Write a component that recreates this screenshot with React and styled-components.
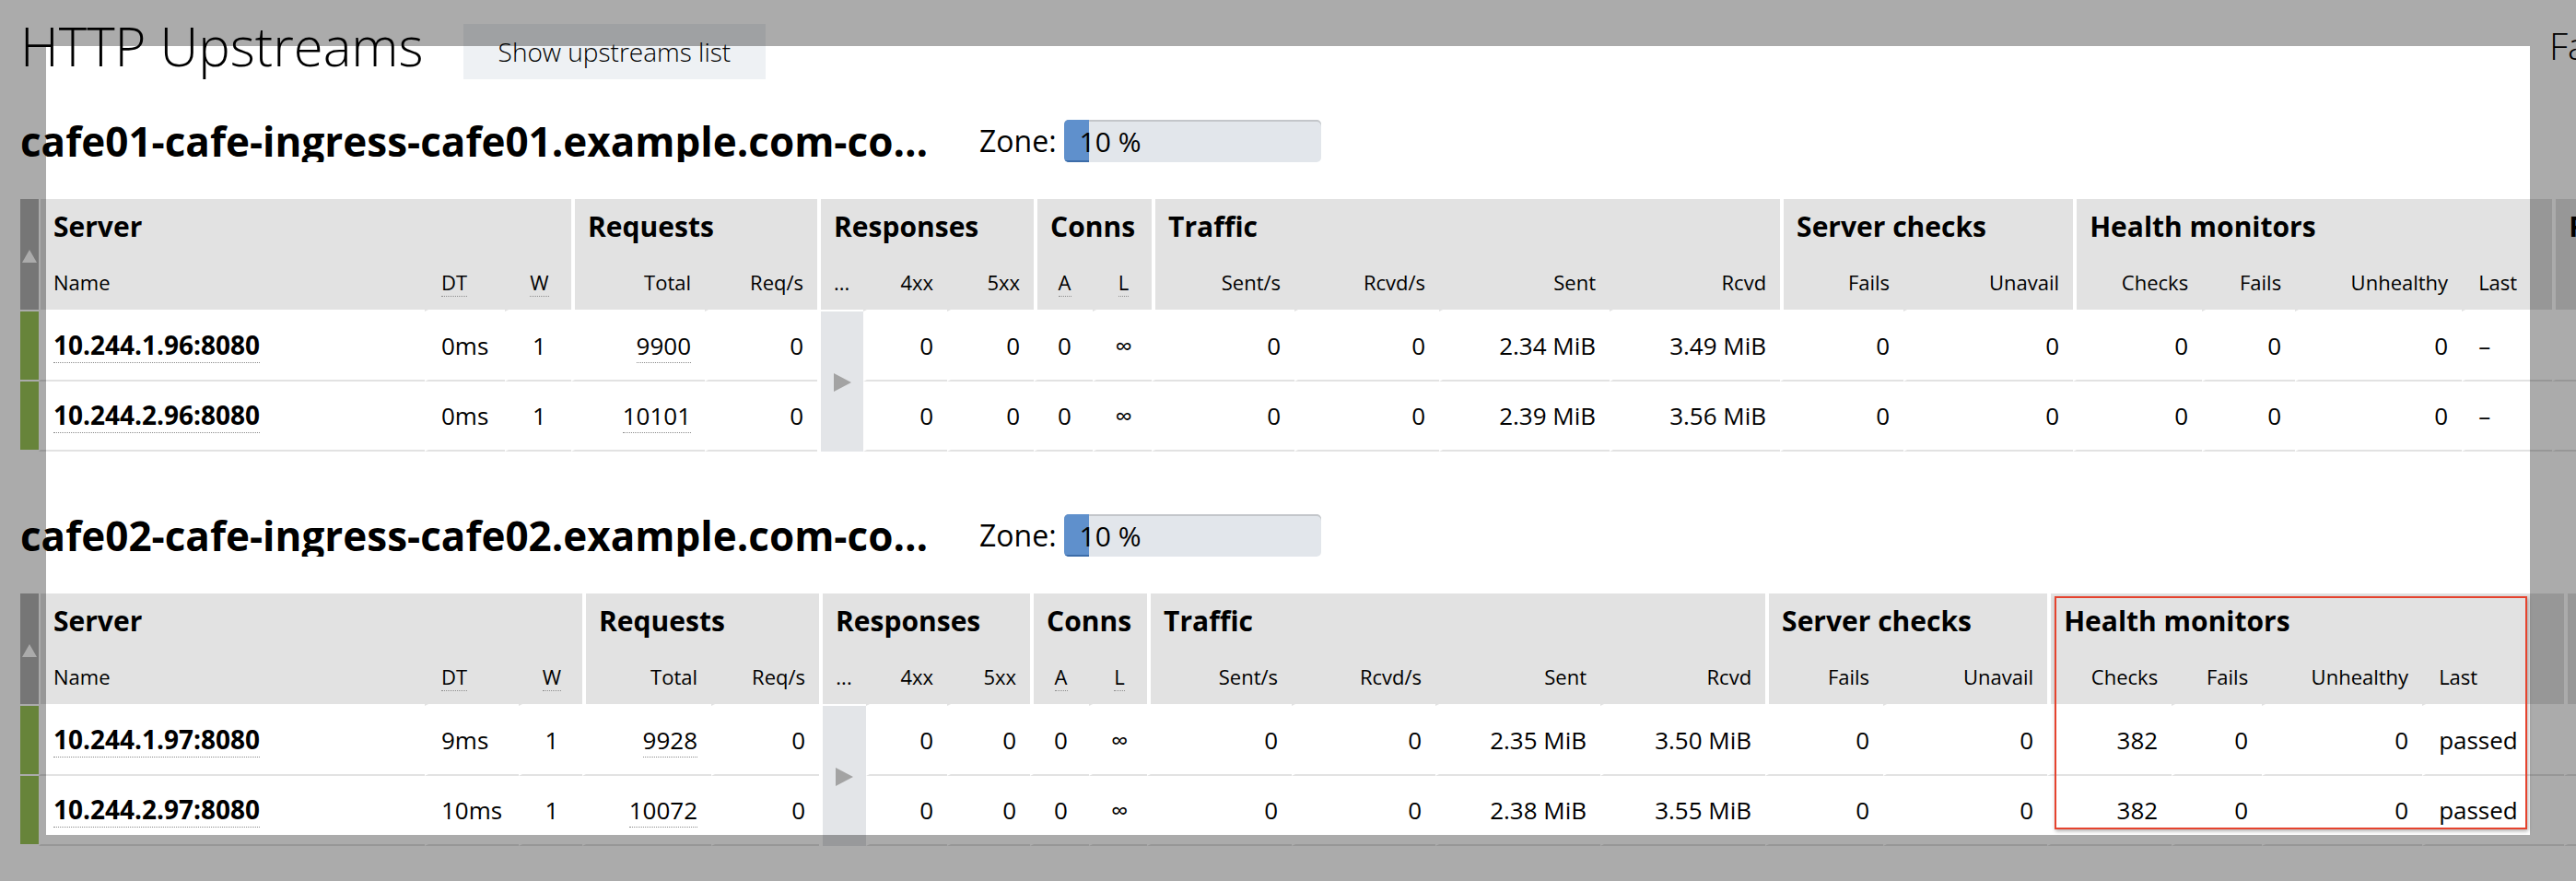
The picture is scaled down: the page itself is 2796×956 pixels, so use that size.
import React from 'react';
import styled, { createGlobalStyle } from 'styled-components';

const GlobalStyle = createGlobalStyle`
  html, body { margin: 0; padding: 0; background: #fff; overflow: hidden; }
  body { font-family: "Open Sans", "DejaVu Sans", sans-serif; color: #000; }
  * { box-sizing: border-box; }
`;

const Page = styled.div`
  padding: 16px 0 0 22px;
  width: max-content;
`;

const Toolbar = styled.header`
  display: flex;
  align-items: flex-start;
  width: 2935px;
`;

const Title = styled.h1`
  margin: 0;
  font-size: 58px;
  font-weight: 300;
  line-height: 68px;
  white-space: nowrap;
`;

const ListButton = styled.button`
  margin: 10px 0 0 43px;
  height: 60px;
  padding: 0 38px;
  border: 0;
  background: #eef1f4;
  font-family: inherit;
  font-size: 28px;
  font-weight: 300;
  color: #000;
  white-space: nowrap;
`;

const FilterLabel = styled.span`
  margin-left: auto;
  font-size: 40px;
  font-weight: 300;
  line-height: 68px;
  white-space: nowrap;
`;

const Section = styled.section`
  margin-top: 44px;
  & + & { margin-top: 68px; }
`;

const SectionHead = styled.div`
  display: flex;
  align-items: center;
  height: 46px;
`;

const UpstreamName = styled.h2`
  flex: none;
  width: 1000px;
  margin: 0;
  font-size: 44px;
  font-weight: 700;
  line-height: 46px;
  white-space: nowrap;
  overflow: hidden;
  text-overflow: ellipsis;
`;

const ZoneLabel = styled.span`
  margin-left: 41px;
  font-size: 32px;
  line-height: 46px;
`;

const ZoneBar = styled.div`
  position: relative;
  display: flex;
  align-items: center;
  margin-left: 8px;
  width: 279px;
  height: 46px;
  padding-left: 17px;
  border-radius: 5px;
  overflow: hidden;
  background: #e2e6eb;
  box-shadow: inset 0 2px 0 #c3c6ca;
  font-size: 30px;
`;

const ZoneFill = styled.div`
  position: absolute;
  left: 0;
  top: 0;
  bottom: 0;
  background: #5f90cc;
  border-bottom: 2px solid #3c6ca8;
`;

const ZoneValue = styled.span`
  position: relative;
  white-space: nowrap;
`;

const Table = styled.table`
  margin-top: 40px;
  border-collapse: separate;
  border-spacing: 0;
  table-layout: fixed;
  width: ${p => p.$w}px;
`;

const Col = styled.col`
  width: ${p => p.$w}px;
`;

const SortTh = styled.th`
  padding: 0;
  background: #b0b0b0;
  border-bottom: 2px solid #fff;
  vertical-align: middle;
  text-align: center;
`;

const UpArrow = styled.span`
  display: inline-block;
  width: 0;
  height: 0;
  border-left: 8px solid transparent;
  border-right: 8px solid transparent;
  border-bottom: 14px solid #fff;
  vertical-align: middle;
`;

const GroupTh = styled.th`
  padding: 0 14px;
  background: #e2e2e2;
  border-left: ${p => (p.$first ? 2 : 4)}px solid #fff;
  font-size: 30px;
  font-weight: 700;
  line-height: 60px;
  text-align: left;
  white-space: nowrap;
  overflow: hidden;
`;

const SubTh = styled.th`
  padding: 0 15px 0 14px;
  background: #e2e2e2;
  border-left: ${p => (p.$first ? 2 : 4)}px solid ${p => (p.$groupStart ? '#fff' : 'transparent')};
  border-bottom: 2px solid #fff;
  font-size: 22px;
  font-weight: 400;
  line-height: 60px;
  text-align: ${p => p.$align};
  white-space: nowrap;
  overflow: hidden;
`;

const StatusTd = styled.td`
  padding: 0;
  background: ${p => (p.$up ? '#9ac557' : '#d9534f')};
  border-bottom: 2px solid #fff;
`;

const Td = styled.td`
  padding: 0 15px 0 14px;
  border-left: ${p => (p.$first ? 2 : 4)}px solid #fff;
  border-bottom: 2px solid #e2e2e2;
  font-size: 26px;
  line-height: 74px;
  height: 76px;
  text-align: ${p => p.$align};
  white-space: nowrap;
  overflow: hidden;
`;

const ExpanderTd = styled.td`
  padding: 0;
  background: #e3e5e8;
  border-left: 4px solid #fff;
  vertical-align: middle;
  text-align: center;
`;

const RightArrow = styled.span`
  display: inline-block;
  width: 0;
  height: 0;
  border-top: 10.5px solid transparent;
  border-bottom: 10.5px solid transparent;
  border-left: 19px solid #a3a3a3;
  vertical-align: middle;
`;

const Abbr = styled.span`
  border-bottom: 1px dotted #8c8c8c;
`;

const NameLink = styled.span`
  font-weight: 700;
  font-size: 28px;
  line-height: 1;
  border-bottom: 1px dotted #8c8c8c;
`;

const Dotted = styled.span`
  border-bottom: 1px dotted #8c8c8c;
`;

const Dim = styled.div`
  position: absolute;
  left: 50px;
  top: 50px;
  width: 2696px;
  height: 856px;
  box-shadow: 0 0 0 4000px rgba(0, 0, 0, 0.33);
  pointer-events: none;
  z-index: 5;
`;

const Highlight = styled.div`
  position: absolute;
  left: 2230px;
  top: 647px;
  width: 513px;
  height: 253px;
  border: 2px solid #e5432e;
  box-shadow: 1px 2px 4px rgba(0, 0, 0, 0.3);
  pointer-events: none;
  z-index: 6;
`;

const GROUPS = [
  { title: 'Server', span: 3 },
  { title: 'Requests', span: 2 },
  { title: 'Responses', span: 3 },
  { title: 'Conns', span: 2 },
  { title: 'Traffic', span: 4 },
  { title: 'Server checks', span: 2 },
  { title: 'Health monitors', span: 4 },
  { title: 'Response time', span: 2 },
];

const COLUMNS = [
  { key: 'name', label: 'Name', align: 'left', groupStart: true },
  { key: 'dt', label: 'DT', align: 'left', abbr: true },
  { key: 'w', label: 'W', align: 'center', abbr: true },
  { key: 'total', label: 'Total', align: 'right', groupStart: true },
  { key: 'rps', label: 'Req/s', align: 'right' },
  { key: 'more', label: '...', align: 'center', groupStart: true },
  { key: 'r4', label: '4xx', align: 'right' },
  { key: 'r5', label: '5xx', align: 'right' },
  { key: 'active', label: 'A', align: 'center', abbr: true, groupStart: true },
  { key: 'limit', label: 'L', align: 'center', abbr: true },
  { key: 'sentRate', label: 'Sent/s', align: 'right', groupStart: true },
  { key: 'rcvdRate', label: 'Rcvd/s', align: 'right' },
  { key: 'sent', label: 'Sent', align: 'right' },
  { key: 'rcvd', label: 'Rcvd', align: 'right' },
  { key: 'fails', label: 'Fails', align: 'right', groupStart: true },
  { key: 'unavail', label: 'Unavail', align: 'right' },
  { key: 'checks', label: 'Checks', align: 'right', groupStart: true },
  { key: 'hfails', label: 'Fails', align: 'right' },
  { key: 'unhealthy', label: 'Unhealthy', align: 'right' },
  { key: 'last', label: 'Last', align: 'left' },
  { key: 'hdr', label: 'Headers', align: 'right', groupStart: true },
  { key: 'resp', label: 'Response', align: 'right' },
];

const row = (name, dt, total, sent, rcvd, checks, last) => ({
  up: true,
  name, dt, w: '1', total, rps: '0', r4: '0', r5: '0', active: '0', limit: '∞',
  sentRate: '0', rcvdRate: '0', sent, rcvd, fails: '0', unavail: '0',
  checks, hfails: '0', unhealthy: '0', last, hdr: '1ms', resp: '1ms',
});

const UPSTREAMS = [
  {
    name: 'cafe01-cafe-ingress-cafe01.example.com-coffee-svc-80',
    zone: 10,
    widths: [419, 87, 72, 145, 122, 50, 91, 94, 64, 64, 155, 157, 185, 185, 134, 184, 140, 101, 181, 98, 170, 180],
    rows: [
      row('10.244.1.96:8080', '0ms', '9900', '2.34 MiB', '3.49 MiB', '0', '–'),
      row('10.244.2.96:8080', '0ms', '10101', '2.39 MiB', '3.56 MiB', '0', '–'),
    ],
  },
  {
    name: 'cafe02-cafe-ingress-cafe02.example.com-coffee-svc-80',
    zone: 10,
    widths: [419, 102, 69, 140, 117, 51, 88, 90, 64, 63, 157, 156, 179, 179, 128, 178, 135, 98, 174, 154, 170, 180],
    rows: [
      row('10.244.1.97:8080', '9ms', '9928', '2.35 MiB', '3.50 MiB', '382', 'passed'),
      row('10.244.2.97:8080', '10ms', '10072', '2.38 MiB', '3.55 MiB', '382', 'passed'),
    ],
  },
];

function renderValue(col, r) {
  const v = r[col.key];
  if (col.key === 'name') return <NameLink>{v}</NameLink>;
  if (col.key === 'total') return <Dotted>{v}</Dotted>;
  return v;
}

function UpstreamTable({ upstream }) {
  const SORT_W = 20;
  const total = SORT_W + upstream.widths.reduce((a, b) => a + b, 0);
  return (
    <Table $w={total}>
      <colgroup>
        <Col $w={SORT_W} />
        {upstream.widths.map((w, i) => <Col key={i} $w={w} />)}
      </colgroup>
      <thead>
        <tr>
          <SortTh rowSpan={2}><UpArrow /></SortTh>
          {GROUPS.map((g, i) => (
            <GroupTh key={g.title} colSpan={g.span} $first={i === 0}>{g.title}</GroupTh>
          ))}
        </tr>
        <tr>
          {COLUMNS.map((c, i) => (
            <SubTh key={c.key} $align={c.align} $groupStart={c.groupStart} $first={i === 0}>
              {c.abbr ? <Abbr>{c.label}</Abbr> : c.label}
            </SubTh>
          ))}
        </tr>
      </thead>
      <tbody>
        {upstream.rows.map((r, ri) => (
          <tr key={r.name}>
            <StatusTd $up={r.up} />
            {COLUMNS.map((c, i) => {
              if (c.key === 'more') {
                return ri === 0 ? (
                  <ExpanderTd key={c.key} rowSpan={upstream.rows.length}><RightArrow /></ExpanderTd>
                ) : null;
              }
              return (
                <Td key={c.key} $align={c.align} $first={i === 0}>{renderValue(c, r)}</Td>
              );
            })}
          </tr>
        ))}
      </tbody>
    </Table>
  );
}

export default function App() {
  return (
    <>
      <GlobalStyle />
      <Page>
        <Toolbar>
          <Title>HTTP Upstreams</Title>
          <ListButton>Show upstreams list</ListButton>
          <FilterLabel>Failed only</FilterLabel>
        </Toolbar>
        {UPSTREAMS.map(u => (
          <Section key={u.name}>
            <SectionHead>
              <UpstreamName>{u.name}</UpstreamName>
              <ZoneLabel>Zone:</ZoneLabel>
              <ZoneBar>
                <ZoneFill style={{ width: `${u.zone}%` }} />
                <ZoneValue>{u.zone} %</ZoneValue>
              </ZoneBar>
            </SectionHead>
            <UpstreamTable upstream={u} />
          </Section>
        ))}
      </Page>
      <Dim />
      <Highlight />
    </>
  );
}
